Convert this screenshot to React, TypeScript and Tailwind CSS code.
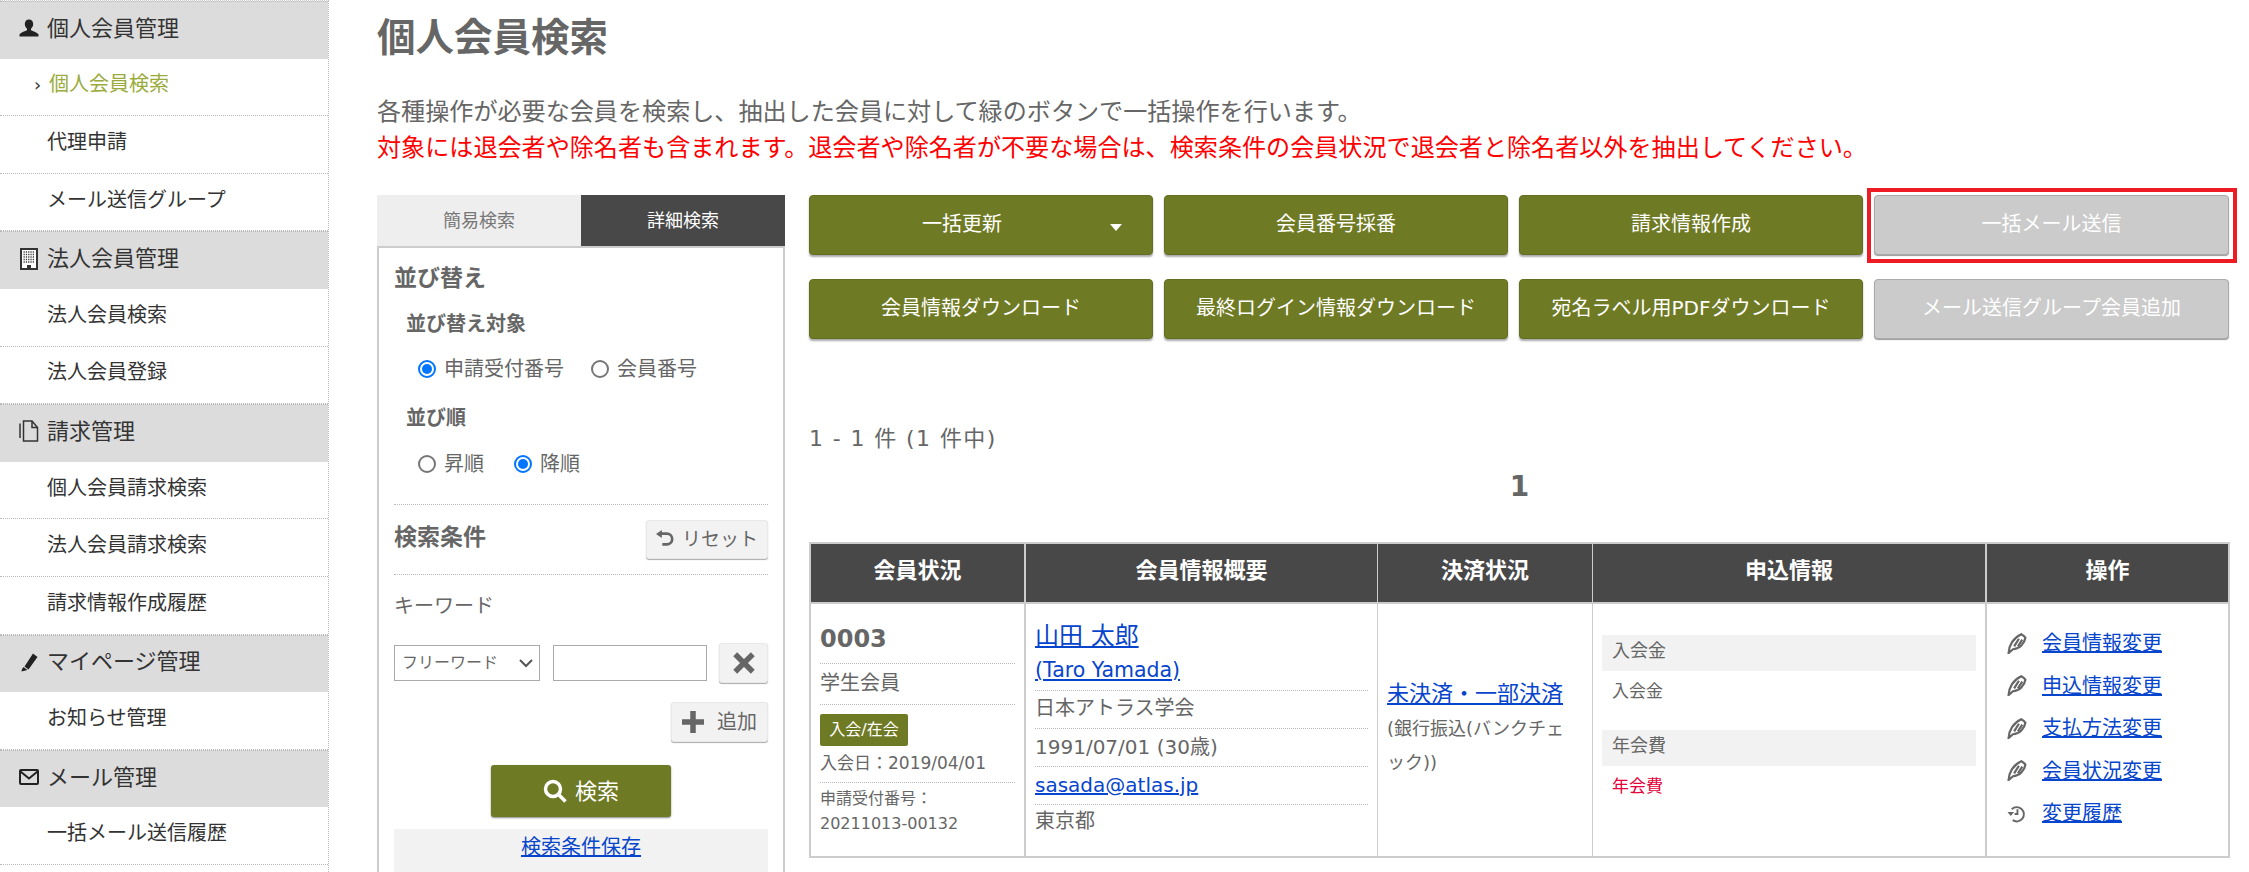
import React from "react";

const Person = () => (
  <svg viewBox="0 0 20 20" className="w-5 h-5 fill-[#222]">
    <path d="M10 1.500c2.600 0 4.200 2 4.200 4.600 0 2-1 3.800-2.200 4.700v1.300c0 .8 5.500 1.800 7.500 4.500v1.900H.5v-1.900c2-2.700 7.500-3.700 7.500-4.500v-1.300C6.800 9.900 5.800 8.100 5.800 6.100 5.800 3.500 7.400 1.500 10 1.500z" />
  </svg>
);
const Building = () => (
  <svg viewBox="0 0 20 22" className="w-5 h-[22px]">
    <rect x="2" y="1" width="16" height="20" fill="#fff" stroke="#333" strokeWidth="2" />
    <path d="M4.500 4h11M4.500 6.500h11M4.500 9h11M4.500 11.500h11M4.500 14h11" stroke="#444" strokeWidth="1.300" strokeDasharray="1.300 1" />
    <rect x="8" y="17" width="4" height="4" fill="#333" />
  </svg>
);
const Doc = () => (
  <svg viewBox="0 0 20 22" className="w-5 h-[22px] fill-none stroke-[#333]" strokeWidth="1.500">
    <path d="M1 18V3.500M4.500 21h14V7.500L13 1H4.500v20z" />
    <path d="M13 1v6.500h5.500" />
  </svg>
);
const Pencil = () => (
  <svg viewBox="0 0 20 20" className="w-5 h-5 fill-[#222]">
    <path d="M14 1.500l4.500 3.500-9 12.500-4 -3zM4.500 15l4 3-6 1.500z" />
    <path d="M3.500 16l2.500 2-3.500 1z" />
  </svg>
);
const Mail = () => (
  <svg viewBox="0 0 20 16" className="w-5 h-4">
    <rect x="1" y="1" width="18" height="14" rx="1" fill="none" stroke="#222" strokeWidth="2" />
    <path d="M1.500 2.500L10 9.500l8.500-7" fill="none" stroke="#222" strokeWidth="2" />
  </svg>
);
const Feather = () => (
  <svg viewBox="0 0 20 22" className="w-[20px] h-[21px] fill-none stroke-[#666]" strokeWidth="2.300">
    <path d="M1.200 21C1.500 13 6 5 14.500 1.200c2 1 3.500 2 4.300 3.800-1 6-6 11.500-13 12L1.200 21z" />
    <path d="M7 14l5-8M11 14l4.500-7" />
  </svg>
);
const History = () => (
  <svg viewBox="0 0 20 20" className="w-[19px] h-[19px] fill-none stroke-[#666]" strokeWidth="2">
    <path d="M5 5.500A7.500 7.500 0 1 1 6 17" />
    <path d="M0.500 8.500h7L4 12.500z" fill="#666" stroke="none" />
    <path d="M11 5.500V10.500H8" />
  </svg>
);

const Head = ({ icon, label }: { icon: React.ReactNode; label: string }) => (
  <div className="h-[57.6px] bg-[#dcdcdc] border-t border-dotted border-[#bbb] flex items-center pl-[19px] pb-[4px] text-[22px] text-[#333] gap-[8px]">
    <span className="w-5 flex justify-center">{icon}</span>
    <span>{label}</span>
  </div>
);
const Item = ({ label, active }: { label: string; active?: boolean }) => (
  <div className={`h-[57.6px] border-b border-dotted border-[#bbb] flex items-center pl-[47px] pb-[5px] text-[20px] ${active ? "text-[#9aab3c]" : "text-[#333]"}`}>
    {active && <span className="text-[#333] text-[18px] -ml-[13px] w-[15px]">›</span>}
    {label}
  </div>
);

const Radio = ({ on, label }: { on?: boolean; label: string }) => (
  <label className="flex items-center gap-[8px] text-[20px] text-[#666]">
    <span className={`w-[18px] h-[18px] rounded-full flex items-center justify-center border-2 ${on ? "border-[#0075ff]" : "border-[#767676]"}`}>
      {on && <span className="w-[10px] h-[10px] rounded-full bg-[#0075ff]" />}
    </span>
    {label}
  </label>
);

const GrayBtn = ({ className, children }: { className: string; children: React.ReactNode }) => (
  <div className={`bg-[#f2f2f2] border border-[#e8e8e8] rounded-[3px] shadow-[0_1px_1px_#aaa] flex items-center justify-center text-[#666] ${className}`}>
    {children}
  </div>
);

const Btn = ({ label, gray, caret, wide }: { label: string; gray?: boolean; caret?: boolean; wide?: boolean }) => (
  <div
    className={`relative h-[60px] rounded-[4px] flex items-center justify-center text-white text-[20px] pb-[3px] ${caret ? "pr-[38px]" : ""} ${wide ? "w-[355px]" : "w-[344px]"} ${
      gray ? "bg-[#cbcbcb] border border-[#aaa] shadow-[0_1px_1px_#999]" : "bg-[#6f7a24] border border-[#646e20] shadow-[0_2px_2px_#aaa]"
    }`}
  >
    {label}
    {caret && <span className="absolute right-[30px] top-[28px] w-0 h-0 border-l-[6px] border-r-[6px] border-t-[7px] border-l-transparent border-r-transparent border-t-white" />}
  </div>
);

const Link = ({ children, className = "" }: { children: React.ReactNode; className?: string }) => (
  <a className={`text-[#0645cc] underline ${className}`}>{children}</a>
);

const Op = ({ icon, label }: { icon: React.ReactNode; label: string }) => (
  <div className="h-[42.500px] flex items-center">
    <span className="w-[35px] flex">{icon}</span>
    <Link className="text-[20px]">{label}</Link>
  </div>
);

const th = "bg-[#484848] text-white font-bold text-[22px] h-[58px] flex items-center justify-center pb-[5px]";

export default function App() {
  return (
    <div className="h-[872px] overflow-hidden bg-white flex font-['DejaVu_Sans','Noto_Sans_CJK_JP',sans-serif] text-[#666]">
      <aside className="w-[329px] shrink-0 border-r border-dotted border-[#bbb] border-t-[1px] border-t-[#ccc]">
        <Head icon={<Person />} label="個人会員管理" />
        <Item label="個人会員検索" active />
        <Item label="代理申請" />
        <Item label="メール送信グループ" />
        <Head icon={<Building />} label="法人会員管理" />
        <Item label="法人会員検索" />
        <Item label="法人会員登録" />
        <Head icon={<Doc />} label="請求管理" />
        <Item label="個人会員請求検索" />
        <Item label="法人会員請求検索" />
        <Item label="請求情報作成履歴" />
        <Head icon={<Pencil />} label="マイページ管理" />
        <Item label="お知らせ管理" />
        <Head icon={<Mail />} label="メール管理" />
        <Item label="一括メール送信履歴" />
      </aside>

      <main className="flex-1 pl-[48px] pr-[19px]">
        <h1 className="text-[38.500px] font-bold h-[76px] flex items-center">個人会員検索</h1>
        <p className="text-[24.100px] mt-[18px] h-[36px] leading-[36px] whitespace-nowrap">各種操作が必要な会員を検索し、抽出した会員に対して緑のボタンで一括操作を行います。</p>
        <p className="text-[24.100px] h-[36px] leading-[36px] text-[#ff0000] whitespace-nowrap">対象には退会者や除名者も含まれます。退会者や除名者が不要な場合は、検索条件の会員状況で退会者と除名者以外を抽出してください。</p>

        <div className="flex mt-[29px] gap-[24px]">
          <section className="w-[408px] shrink-0">
            <div className="flex h-[51px] text-[18px]">
              <div className="flex-1 bg-[#eee] text-[#777] flex items-center justify-center">簡易検索</div>
              <div className="flex-1 bg-[#484848] text-white flex items-center justify-center">詳細検索</div>
            </div>
            <div className="border-2 border-[#ccc] h-[640px] px-[15px]">
              <h2 className="text-[23px] font-bold mt-[13px] leading-[34px]">並び替え</h2>
              <h3 className="text-[20px] font-bold ml-[12px] mt-[14px] leading-[30px]">並び替え対象</h3>
              <div className="flex ml-[24px] gap-[27px] mt-[14px] h-[32px] items-center">
                <Radio on label="申請受付番号" />
                <Radio label="会員番号" />
              </div>
              <h3 className="text-[20px] font-bold ml-[12px] mt-[18px] leading-[30px]">並び順</h3>
              <div className="flex ml-[24px] gap-[30px] mt-[15px] h-[32px] items-center">
                <Radio label="昇順" />
                <Radio on label="降順" />
              </div>
              <div className="border-t border-dotted border-[#bbb] mt-[24px]" />
              <div className="flex items-center justify-between mt-[14px] h-[40px]">
                <h2 className="text-[23px] font-bold pb-[4px]">検索条件</h2>
                <GrayBtn className="w-[122px] h-[39px] text-[19px] gap-[8px]">
                  <svg viewBox="0 0 20 20" className="w-[18px] h-[18px] fill-none stroke-[#666]" strokeWidth="3">
                    <path d="M5 4h7a5.500 5.500 0 0 1 0 12H7" />
                    <path d="M0 4.500L6.500 0v9z" fill="#666" stroke="none" />
                  </svg>
                  リセット
                </GrayBtn>
              </div>
              <div className="border-t border-dotted border-[#bbb] mt-[15px]" />
              <div className="mt-[16px] text-[20px] leading-[30px]">キーワード</div>
              <div className="flex items-center mt-[22px] h-[40px]">
                <div className="w-[146px] h-[36px] border border-[#aaa] flex items-center justify-between pl-[7px] pr-[6px] text-[16px]">
                  フリーワード
                  <svg viewBox="0 0 14 10" className="w-[14px] h-[10px] fill-none stroke-[#555]" strokeWidth="2"><path d="M1 2l6 6 6-6" /></svg>
                </div>
                <div className="w-[154px] h-[36px] border border-[#aaa] ml-[13px]" />
                <GrayBtn className="w-[49px] h-[40px] ml-[12px]">
                  <svg viewBox="0 0 20 20" className="w-[22px] h-[22px] stroke-[#666]" strokeWidth="5"><path d="M2 2l16 16M18 2L2 18" /></svg>
                </GrayBtn>
              </div>
              <div className="flex justify-end mt-[19px]">
                <GrayBtn className="w-[97px] h-[40px] text-[20px] gap-[13px]">
                  <svg viewBox="0 0 20 20" className="w-[22px] h-[22px] stroke-[#666]" strokeWidth="5"><path d="M10 0v20M0 10h20" /></svg>
                  追加
                </GrayBtn>
              </div>
              <div className="flex justify-center mt-[23px]">
                <div className="w-[180px] h-[52px] bg-[#6f7a24] rounded-[3px] shadow-[0_1px_2px_#888] flex items-center justify-center text-white text-[22px] gap-[8px]">
                  <svg viewBox="0 0 24 24" className="w-[24px] h-[24px] fill-none stroke-white" strokeWidth="3.500">
                    <circle cx="10" cy="10" r="7.500" />
                    <path d="M15.500 15.500L22.500 22.500" />
                  </svg>
                  検索
                </div>
              </div>
              <div className="mt-[12px] h-[60px] bg-[#f2f2f2] pt-[3px] text-center text-[20px]">
                <Link>検索条件保存</Link>
              </div>
            </div>
          </section>

          <section className="flex-1 min-w-0">
            <div className="flex gap-[11px]">
              <Btn label="一括更新" caret />
              <Btn label="会員番号採番" />
              <Btn label="請求情報作成" />
              <div className="relative">
                <Btn label="一括メール送信" gray wide />
                <div className="absolute -left-[7px] -top-[7px] -right-[8px] -bottom-[8px] border-4 border-[#ed1c24]" />
              </div>
            </div>
            <div className="flex gap-[11px] mt-[24px]">
              <Btn label="会員情報ダウンロード" />
              <Btn label="最終ログイン情報ダウンロード" />
              <Btn label="宛名ラベル用PDFダウンロード" />
              <Btn label="メール送信グループ会員追加" gray wide />
            </div>

            <div className="text-[22px] tracking-[1.4px] mt-[85px] leading-[30px]">1 - 1 件 (1 件中)</div>
            <div className="text-center text-[28px] font-bold mt-[15px] leading-[36px]">1</div>

            <div className="mt-[37px] border-2 border-[#ccc] flex h-[316px] w-[1421px]">
              <div className="w-[215px] border-r-2 border-[#ccc] flex flex-col">
                <div className={th}>会員状況</div>
                <div className="border-t-2 border-[#ccc] flex-1 px-[9px] pt-[18px]">
                  <div className="text-[24px] font-bold h-[42px] leading-[34px] border-b border-dotted border-[#bbb]">0003</div>
                  <div className="text-[20px] h-[41px] leading-[38px] border-b border-dotted border-[#bbb]">学生会員</div>
                  <div className="mt-[9px] w-[88px] h-[32px] bg-[#6f7a24] rounded-[2px] text-white text-[16px] flex items-center justify-center">入会/在会</div>
                  <div className="text-[17px] h-[37px] leading-[34px] border-b border-dotted border-[#bbb]">入会日：2019/04/01</div>
                  <div className="text-[16px] leading-[25px] mt-[3px]">申請受付番号：<br />20211013-00132</div>
                </div>
              </div>
              <div className="w-[352px] border-r border-[#ccc] flex flex-col">
                <div className={th}>会員情報概要</div>
                <div className="border-t-2 border-[#ccc] flex-1 px-[9px] pt-[14px]">
                  <div className="text-[24px] leading-[36px]"><Link>山田 太郎</Link></div>
                  <div className="text-[20.500px] leading-[32px] h-[37px] border-b border-dotted border-[#bbb]"><Link>(Taro Yamada)</Link></div>
                  <div className="text-[20px] leading-[35px] h-[38px] border-b border-dotted border-[#bbb]">日本アトラス学会</div>
                  <div className="text-[20px] leading-[36px] h-[38px] border-b border-dotted border-[#bbb]">1991/07/01 (30歳)</div>
                  <div className="text-[20px] leading-[36px] h-[38px] border-b border-dotted border-[#bbb]"><Link>sasada@atlas.jp</Link></div>
                  <div className="text-[20px] leading-[33px]">東京都</div>
                </div>
              </div>
              <div className="w-[215px] border-r border-[#ccc] flex flex-col">
                <div className={th}>決済状況</div>
                <div className="border-t-2 border-[#ccc] flex-1 pl-[9px] pr-[20px] flex flex-col justify-center pb-[5px]">
                  <div className="text-[22px] leading-[36px] whitespace-nowrap"><Link>未決済・一部決済</Link></div>
                  <div className="text-[18px] leading-[34px]">(銀行振込(バンクチェック))</div>
                </div>
              </div>
              <div className="w-[394px] border-r-2 border-[#ccc] flex flex-col">
                <div className={th}>申込情報</div>
                <div className="border-t-2 border-[#ccc] flex-1 px-[9px] pt-[31px]">
                  <div className="h-[36px] bg-[#f2f2f2] pl-[10px] text-[18px] leading-[32px]">入会金</div>
                  <div className="h-[59px] pl-[10px] text-[17px] leading-[40px]">入会金</div>
                  <div className="h-[36px] bg-[#f2f2f2] pl-[10px] text-[18px] leading-[32px]">年会費</div>
                  <div className="pl-[10px] text-[17px] leading-[40px] text-[#e6003a]">年会費</div>
                </div>
              </div>
              <div className="flex-1 flex flex-col">
                <div className={th}>操作</div>
                <div className="border-t-2 border-[#ccc] flex-1 pl-[20px] pt-[18px]">
                  <Op icon={<Feather />} label="会員情報変更" />
                  <Op icon={<Feather />} label="申込情報変更" />
                  <Op icon={<Feather />} label="支払方法変更" />
                  <Op icon={<Feather />} label="会員状況変更" />
                  <Op icon={<History />} label="変更履歴" />
                </div>
              </div>
            </div>
          </section>
        </div>
      </main>
    </div>
  );
}
